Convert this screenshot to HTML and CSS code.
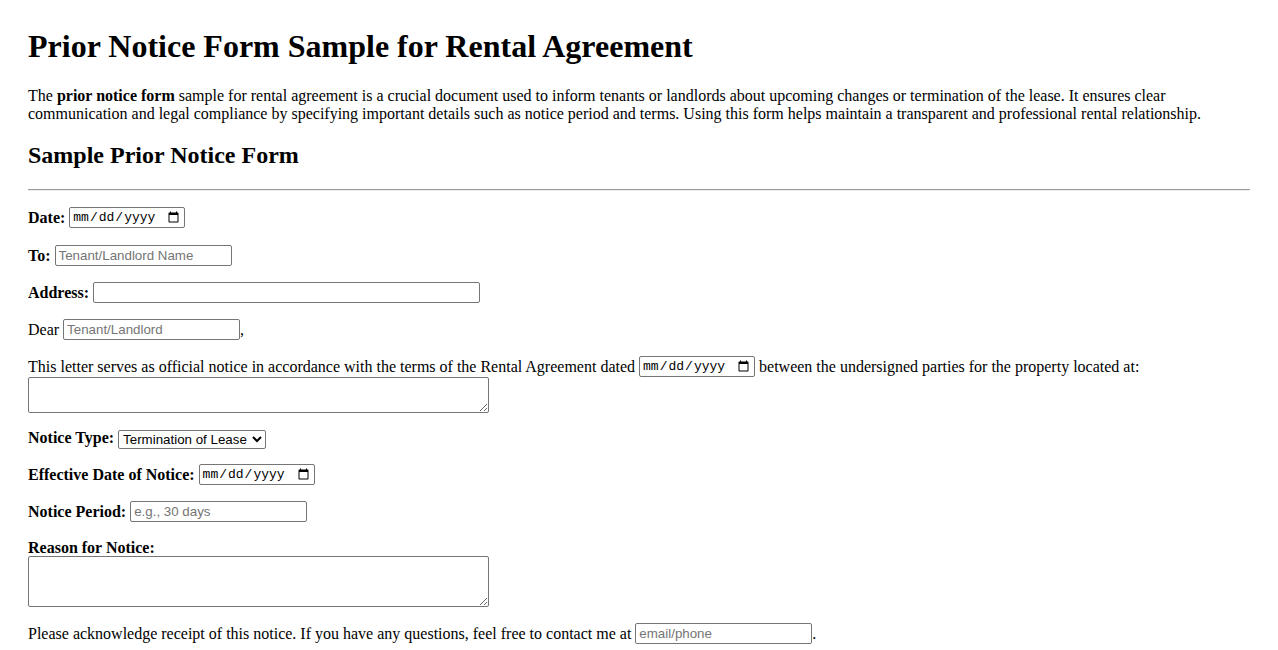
FILE: index.html
```html
<!DOCTYPE html>
<html lang="en">
<head>
<meta charset="utf-8">
<title>Prior Notice Form Sample for Rental Agreement</title>
<link rel="stylesheet" href="styles.css">
</head>
<body>
<div class="page">
  <h1>Prior Notice Form Sample for Rental Agreement</h1>
  <p class="intro">The <strong>prior notice form</strong> sample for rental agreement is a crucial document used to inform tenants or landlords about upcoming changes or termination of the lease. It ensures clear communication and legal compliance by specifying important details such as notice period and terms. Using this form helps maintain a transparent and professional rental relationship.</p>
  <h2>Sample Prior Notice Form</h2>
  <hr>
  <form>
    <p class="row first"><label><strong>Date:</strong> <input class="date" type="date"></label></p>
    <p class="row"><label><strong>To:</strong> <input class="text" type="text" placeholder="Tenant/Landlord Name"></label></p>
    <p class="row"><label><strong>Address:</strong> <input class="text wide" type="text"></label></p>
    <p class="row">Dear <input class="text" type="text" placeholder="Tenant/Landlord">,</p>
    <p class="row">This letter serves as official notice in accordance with the terms of the Rental Agreement dated <input class="date" type="date"> between the undersigned parties for the property located at:<br><textarea class="area small"></textarea></p>
    <p class="select-row"><label><strong>Notice Type:</strong> <select class="sel"><option>Termination of Lease</option><option>Rent Increase</option><option>Property Inspection</option></select></label></p>
    <p class="row after-select"><label><strong>Effective Date of Notice:</strong> <input class="date" type="date"></label></p>
    <p class="row period"><label><strong>Notice Period:</strong> <input class="text" type="text" placeholder="e.g., 30 days"></label></p>
    <p><label><strong>Reason for Notice:</strong><br><textarea class="area big"></textarea></label></p>
    <p class="row">Please acknowledge receipt of this notice. If you have any questions, feel free to contact me at <input class="text" type="text" placeholder="email/phone">.</p>
  </form>
</div>
</body>
</html>
```
FILE: styles.css
```css
html, body {
  margin: 0;
  padding: 0;
  background: #fff;
}
body {
  font-family: "Liberation Serif", "Times New Roman", serif;
  font-size: 16px;
  color: #000;
}
.page {
  padding: 28px 28px;
}
h1 {
  font-size: 32px;
  margin: 0 0 22px;
}
.intro {
  margin-top: 22px;
}
h2 {
  font-size: 24px;
  margin: 18.92px 0 19.92px;
}
hr {
  margin: 8px 0;
  border: 0;
  border-top: 1px solid #9a9a9a;
  border-bottom: 1px solid #eeeeee;
  height: 0;
}
p {
  margin: 16px 0;
}
.row {
  line-height: 21px;
}
.row.first {
  margin-bottom: 17px;
}
.select-row {
  margin-bottom: 15px;
}
.row.after-select {
  margin-top: 15px;
}
.row.period {
  margin-bottom: 17px;
}
.text {
  font-family: "Liberation Sans", Arial, sans-serif;
  font-size: 13.33px;
  box-sizing: border-box;
  width: 177px;
  height: 21px;
  padding: 1px 3px;
  border: 1px solid #767676;
  border-radius: 2px;
  color: #000;
  vertical-align: top;
}
.text::placeholder {
  color: #757575;
}
.text.wide {
  width: 387px;
}
.date {
  font-family: "Liberation Mono", "Courier New", monospace;
  font-size: 13px;
  box-sizing: border-box;
  width: 116px;
  height: 21px;
  padding: 1px 2px;
  border: 1px solid #767676;
  border-radius: 2px;
  vertical-align: top;
}
.sel {
  font-family: "Liberation Sans", Arial, sans-serif;
  font-size: 13.33px;
  box-sizing: border-box;
  width: 148px;
  height: 19px;
  border: 1px solid #767676;
  border-radius: 2px;
  background: #fff;
  color: #000;
  vertical-align: middle;
}
.area {
  box-sizing: border-box;
  width: 461px;
  border: 1px solid #767676;
  border-radius: 2px;
  font-family: "Liberation Mono", monospace;
  font-size: 13px;
  vertical-align: bottom;
}
.area.small {
  height: 36px;
}
.area.big {
  height: 51px;
  margin-top: -1px;
}
```
